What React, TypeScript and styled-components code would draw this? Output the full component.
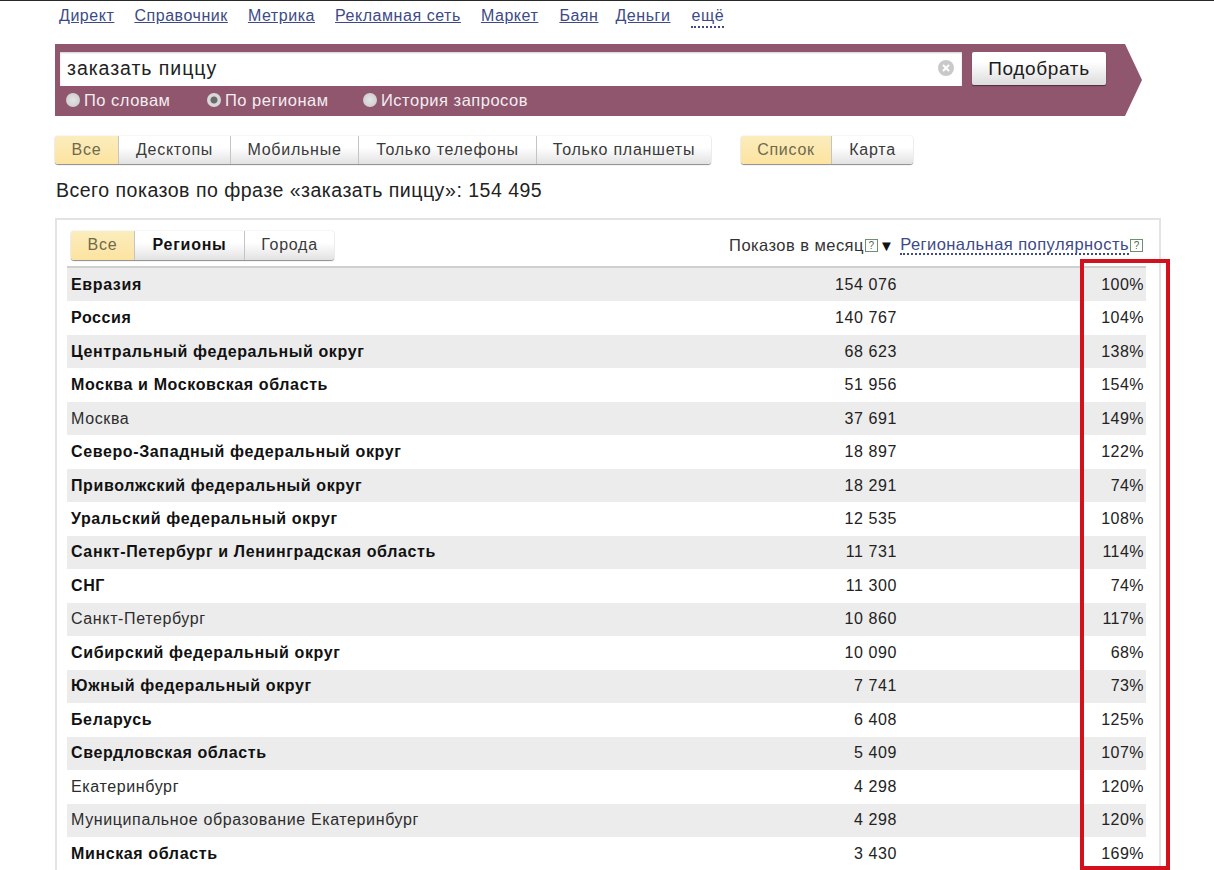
import styled, { createGlobalStyle } from 'styled-components';

const GlobalStyle = createGlobalStyle`
  html, body {
    margin: 0;
    padding: 0;
    background: #fff;
    overflow: hidden;
  }
  body {
    font-family: "Liberation Sans", Arial, sans-serif;
    color: #1c1c1c;
  }
`

const Page = styled.div`
  position: relative;
  width: 1214px;
  height: 870px;
  overflow: hidden;
  border-top: 1px solid #2a2a2a;
  box-sizing: border-box;
  padding-left: 55px;
`

const TopNav = styled.nav`
  display: flex;
  height: 43px;
  padding: 6px 0 0 4px;
  box-sizing: border-box;
  font-size: 16px;
  letter-spacing: 0.55px;
  line-height: 18px;
`

const NavLink = styled.a<{ $dotted?: boolean; $gap: number }>`
  color: #3d4a86;
  margin-right: ${(p) => p.$gap}px;
  text-decoration: ${(p) => (p.$dotted ? 'none' : 'underline')};
  border-bottom: ${(p) => (p.$dotted ? '2px dotted #3d4a86' : 'none')};
  height: ${(p) => (p.$dotted ? '19px' : 'auto')};
`

const SearchBand = styled.div`
  width: 1087px;
  height: 72px;
  background: #8f566e;
  clip-path: polygon(0 0, 1070px 0, 100% 50%, 1070px 100%, 0 100%);
  padding: 8px 0 0 5px;
  box-sizing: border-box;
`

const SearchRow = styled.div`
  display: flex;
  gap: 10px;
`

const SearchInput = styled.div`
  width: 902px;
  height: 34px;
  background: #fff;
  box-sizing: border-box;
  padding: 0 8px 2px 7px;
  display: flex;
  align-items: center;
  justify-content: space-between;
  font-size: 19.5px;
  letter-spacing: 0.95px;
  color: #222;
  box-shadow: inset 0 1px 2px rgba(0, 0, 0, 0.2);
`

const SearchButton = styled.div`
  width: 134px;
  height: 33px;
  display: flex;
  align-items: center;
  justify-content: center;
  font-size: 19px;
  letter-spacing: 0.65px;
  color: #1c1c1c;
  background: linear-gradient(#fff 30%, #dcdcdc);
  border-radius: 2px;
  box-shadow: 0 1px 1px rgba(40, 20, 30, 0.6);
`

const RadioRow = styled.div`
  display: flex;
  height: 28px;
  align-items: center;
  padding-left: 6px;
  color: #f3edf0;
  font-size: 16.5px;
  letter-spacing: 0.5px;
`

const RadioItem = styled.div<{ $width: number }>`
  display: flex;
  align-items: center;
  gap: 4px;
  width: ${(p) => p.$width}px;
  white-space: nowrap;
`

const RadioDot = styled.span<{ $checked?: boolean }>`
  width: 14px;
  height: 14px;
  border-radius: 50%;
  background: radial-gradient(circle, ${(p) => (p.$checked ? '#6b6b6b 0 3px, #d8d8d8 4px' : '#e4e4e4 0, #c8c8c8')});
  flex: none;
`

const ControlRow = styled.div`
  display: flex;
  gap: 30px;
  margin-top: 20px;
`

const Segmented = styled.div`
  display: flex;
  height: 28px;
  border-radius: 3px;
  box-shadow: 0 1px 1px #8a8a8a, 0 0 1px #aaa;
`

const Segment = styled.div<{ $width: number; $active?: boolean; $strong?: boolean; $height?: number }>`
  width: ${(p) => p.$width}px;
  height: ${(p) => p.$height ?? 28}px;
  display: flex;
  align-items: center;
  justify-content: center;
  box-sizing: border-box;
  font-size: 16px;
  letter-spacing: 0.75px;
  font-weight: ${(p) => (p.$strong ? 700 : 400)};
  color: ${(p) => (p.$active ? '#6e6a4e' : p.$strong ? '#111' : '#3a3a3a')};
  background: ${(p) => (p.$active ? 'linear-gradient(#fbedbd, #fde3a0)' : 'linear-gradient(#fff 40%, #e2e2e2)')};
  border-right: 1px solid #c4c4c4;
  &:first-child {
    border-radius: 3px 0 0 3px;
  }
  &:last-child {
    border-right: none;
    border-radius: 0 3px 3px 0;
  }
`

const TotalLine = styled.div`
  font-size: 19.5px;
  letter-spacing: 0.5px;
  line-height: 22px;
  margin: 15px 0 17px 1px;
  color: #222;
`

const Panel = styled.section`
  position: relative;
  width: 1106px;
  height: 700px;
  box-sizing: border-box;
  border: 2px solid #e3e3e3;
  border-bottom: none;
  padding: 11px 13px 0 10px;
`

const PanelHead = styled.div`
  display: flex;
  justify-content: space-between;
  align-items: center;
  height: 37px;
  padding: 0 3px 7px 4px;
  box-sizing: border-box;
  border-bottom: 2px solid #cfcfcf;
`

const PanelTabs = styled(Segmented)`
  height: 29px;
`

const ColumnTitles = styled.div`
  display: flex;
  align-items: center;
  font-size: 16.5px;
  letter-spacing: 0.45px;
  color: #333;
  white-space: nowrap;
`

const PopularityLink = styled.span`
  color: #3d4a86;
  border-bottom: 2px dotted #3d4a86;
  line-height: 17px;
  margin-left: 6px;
`

const HelpIcon = styled.span`
  width: 11px;
  height: 11px;
  margin-left: 1px;
  border: 1px solid #6f8f6f;
  color: #4d6f4d;
  font-size: 10px;
  letter-spacing: 0;
  line-height: 11px;
  text-align: center;
`

const SortMark = styled.span`
  font-size: 15px;
  color: #111;
  margin-left: 1px;
`

const Rows = styled.div`
  display: grid;
  grid-auto-rows: 33.47px;
`

const Row = styled.div<{ $odd: boolean }>`
  display: grid;
  grid-template-columns: 1fr 120px 247px;
  align-items: center;
  padding: 0 2px 0 4px;
  font-size: 16px;
  color: #222;
  background: ${(p) => (p.$odd ? '#ececec' : '#fff')};
`

const RegionName = styled.div<{ $bold: boolean }>`
  font-weight: ${(p) => (p.$bold ? 700 : 400)};
  letter-spacing: ${(p) => (p.$bold ? '0.62px' : '0.62px')};
  color: ${(p) => (p.$bold ? '#111' : '#2c2c2c')};
`

const ShowsCell = styled.div`
  text-align: right;
  letter-spacing: 0.6px;
`

const ShareCell = styled.div`
  text-align: right;
  letter-spacing: 0.45px;
`

const Highlight = styled.div`
  position: absolute;
  left: 1080px;
  top: 258px;
  width: 90px;
  height: 611px;
  box-sizing: border-box;
  border: 4px solid #d3111c;
  pointer-events: none;
`

const navLinks: [string, number][] = [
  ['Директ', 20],
  ['Справочник', 20],
  ['Метрика', 20],
  ['Рекламная сеть', 20],
  ['Маркет', 21],
  ['Баян', 17],
  ['Деньги', 21],
];

const rows: [string, string, string, boolean][] = [
  ['Евразия', '154 076', '100%', true],
  ['Россия', '140 767', '104%', true],
  ['Центральный федеральный округ', '68 623', '138%', true],
  ['Москва и Московская область', '51 956', '154%', true],
  ['Москва', '37 691', '149%', false],
  ['Северо-Западный федеральный округ', '18 897', '122%', true],
  ['Приволжский федеральный округ', '18 291', '74%', true],
  ['Уральский федеральный округ', '12 535', '108%', true],
  ['Санкт-Петербург и Ленинградская область', '11 731', '114%', true],
  ['СНГ', '11 300', '74%', true],
  ['Санкт-Петербург', '10 860', '117%', false],
  ['Сибирский федеральный округ', '10 090', '68%', true],
  ['Южный федеральный округ', '7 741', '73%', true],
  ['Беларусь', '6 408', '125%', true],
  ['Свердловская область', '5 409', '107%', true],
  ['Екатеринбург', '4 298', '120%', false],
  ['Муниципальное образование Екатеринбург', '4 298', '120%', false],
  ['Минская область', '3 430', '169%', true],
];

const ClearIcon = () => (
  <svg width="16" height="16" viewBox="0 0 16 16">
    <circle cx="8" cy="8" r="8" fill="#c9c9c9" />
    <path d="M5 5l6 6M11 5l-6 6" stroke="#fff" strokeWidth="2" />
  </svg>
);

const App = () => (
  <Page>
    <GlobalStyle />
    <TopNav>
      {navLinks.map(([label, gap]) => (
        <NavLink key={label} $gap={gap}>{label}</NavLink>
      ))}
      <NavLink $dotted $gap={0}>ещё</NavLink>
    </TopNav>
    <SearchBand>
      <SearchRow>
        <SearchInput>
          заказать пиццу
          <ClearIcon />
        </SearchInput>
        <SearchButton>Подобрать</SearchButton>
      </SearchRow>
      <RadioRow>
        <RadioItem $width={141}><RadioDot />По словам</RadioItem>
        <RadioItem $width={156}><RadioDot $checked />По регионам</RadioItem>
        <RadioItem $width={170}><RadioDot />История запросов</RadioItem>
      </RadioRow>
    </SearchBand>
    <ControlRow>
      <Segmented>
        <Segment $width={64} $active>Все</Segment>
        <Segment $width={112}>Десктопы</Segment>
        <Segment $width={128}>Мобильные</Segment>
        <Segment $width={178}>Только телефоны</Segment>
        <Segment $width={174}>Только планшеты</Segment>
      </Segmented>
      <Segmented>
        <Segment $width={91} $active>Список</Segment>
        <Segment $width={81}>Карта</Segment>
      </Segmented>
    </ControlRow>
    <TotalLine>Всего показов по фразе «заказать пиццу»: 154 495</TotalLine>
    <Panel>
      <PanelHead>
        <PanelTabs>
          <Segment $width={64} $height={29} $active>Все</Segment>
          <Segment $width={110} $height={29} $strong>Регионы</Segment>
          <Segment $width={89} $height={29}>Города</Segment>
        </PanelTabs>
        <ColumnTitles>
          Показов в месяц<HelpIcon>?</HelpIcon><SortMark>▼</SortMark>
          <PopularityLink>Региональная популярность</PopularityLink><HelpIcon>?</HelpIcon>
        </ColumnTitles>
      </PanelHead>
      <Rows>
        {rows.map(([name, shows, share, bold], i) => (
          <Row key={name} $odd={i % 2 === 0}>
            <RegionName $bold={bold}>{name}</RegionName>
            <ShowsCell>{shows}</ShowsCell>
            <ShareCell>{share}</ShareCell>
          </Row>
        ))}
      </Rows>
    </Panel>
    <Highlight />
  </Page>
);

export default App;
